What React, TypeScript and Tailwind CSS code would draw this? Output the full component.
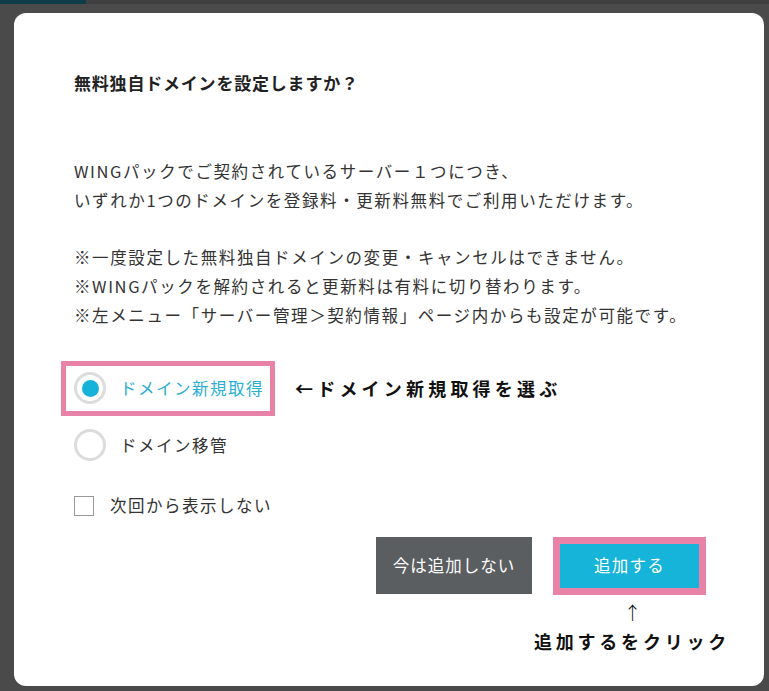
import React from "react";

const jp = { fontFamily: '"Noto Sans CJK JP", "Noto Sans", sans-serif' };

export default function App() {
  return (
    <div className="w-[769px] h-[691px] bg-[#4a4a4a] overflow-hidden flex flex-col" style={jp}>
      <div className="h-[4px] flex shrink-0">
        <div className="w-[86px] bg-[#0f3c49]" />
        <div className="flex-1 bg-[#3f3f3f]" />
      </div>
      <div className="pl-[14px] pt-[9px]">
        <div className="w-[750px] h-[673px] bg-white rounded-[12px] pl-[60px] pr-[58px] pt-[58px] flex flex-col">
          <h2 className="text-[17px] leading-[24px] font-bold text-[#222] tracking-[0.8px]">
            無料独自ドメインを設定しますか？
          </h2>
          <div className="mt-[62px] text-[16.5px] leading-[28.8px] text-[#333] tracking-[1.6px]">
            <p>WINGパックでご契約されているサーバー１つにつき、</p>
            <p>いずれか1つのドメインを登録料・更新料無料でご利用いただけます。</p>
            <p className="h-[28.8px]" />
            <p>※一度設定した無料独自ドメインの変更・キャンセルはできません。</p>
            <p>※WINGパックを解約されると更新料は有料に切り替わります。</p>
            <p>※左メニュー「サーバー管理＞契約情報」ページ内からも設定が可能です。</p>
          </div>

          <div className="mt-[31px] flex items-center">
            <div className="ml-[-13px] border-[5px] border-[#e882a6] h-[55px] pl-[8px] pr-[6px] flex items-center">
              <span className="w-[32px] h-[32px] rounded-full border-[3px] border-[#dcdcdc] flex items-center justify-center">
                <span className="w-[17px] h-[17px] rounded-full bg-[#17b2d9]" />
              </span>
              <span className="ml-[14px] text-[16.5px] text-[#2aaed2] tracking-[1.5px]">ドメイン新規取得</span>
            </div>
            <span className="ml-[20px] text-[18px] font-bold text-[#111] tracking-[4.2px]">←ドメイン新規取得を選ぶ</span>
          </div>

          <div className="mt-[2px] h-[55px] flex items-center">
            <span className="w-[32px] h-[32px] rounded-full border-[3px] border-[#dcdcdc]" />
            <span className="ml-[14px] text-[16.5px] text-[#333] tracking-[1.5px]">ドメイン移管</span>
          </div>

          <div className="mt-[23px] h-[20px] flex items-center">
            <span className="w-[20px] h-[20px] border border-[#9a9a9a] bg-white" />
            <span className="ml-[16px] text-[16.5px] text-[#333] tracking-[1.5px]">次回から表示しない</span>
          </div>

          <div className="mt-[21px] flex justify-end gap-[21px]">
            <button className="w-[156px] h-[57px] bg-[#5a5e60] text-white text-[16.5px] tracking-[1px]">
              今は追加しない
            </button>
            <div className="w-[153px] flex flex-col items-center">
              <div className="border-[7px] border-[#e882a6] w-[153px] h-[58px]">
                <button className="w-full h-full bg-[#17b4da] text-white text-[16.5px] tracking-[1.2px]">
                  追加する
                </button>
              </div>
              <span className="mt-[6px] ml-[6px] text-[18px] leading-[22px] font-light text-[#111]">↑</span>
              <span className="mt-[6px] ml-[5px] text-[18px] leading-[24px] font-bold text-[#111] tracking-[3.8px] whitespace-nowrap">
                追加するをクリック
              </span>
            </div>
          </div>
        </div>
      </div>
    </div>
  );
}
